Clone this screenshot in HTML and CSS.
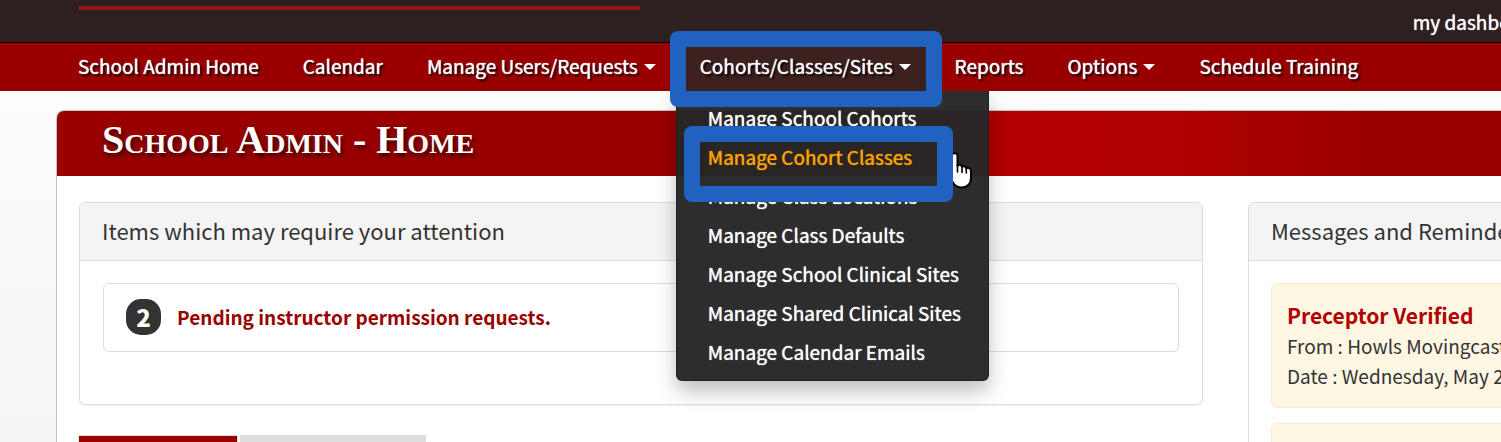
FILE: index.html
```html
<!DOCTYPE html>
<html lang="en">
<head>
<meta charset="utf-8">
<title>School Admin - Home</title>
<link rel="stylesheet" href="styles.css">
</head>
<body>
<header class="topbar">
  <div class="brand-rule"></div>
  <a class="dash-link" href="#">my dashboard</a>
</header>
<nav class="navbar">
  <ul class="nav-list">
    <li class="nav-item"><a class="nav-link" href="#">School Admin Home</a></li>
    <li class="nav-item"><a class="nav-link" href="#">Calendar</a></li>
    <li class="nav-item"><a class="nav-link" href="#">Manage Users/Requests<span class="caret"></span></a></li>
    <li class="nav-item nav-item-open">
      <a class="nav-link" href="#">Cohorts/Classes/Sites<span class="caret"></span></a>
      <ul class="menu">
        <li><a class="menu-link" href="#">Manage School Cohorts</a></li>
        <li class="menu-current">
          <a class="menu-link" href="#">Manage Cohort Classes</a>
          <svg class="pointer" viewBox="0 0 28 38" aria-hidden="true">
            <path d="M7 4.500C7 1.500 12.500 1.500 12.500 4.500V15C13 13 17 13.500 17 16C18 14.500 21 15 21.300 17.300C22.500 16 26 17 26 20V27C26 33 22 36.500 16.500 36.500C11 36.500 9 34 6.500 29L2 22C1 19 4 18 7 21Z" fill="#fff" stroke="#000" stroke-width="2" stroke-linejoin="round"/>
            <path d="M12.500 14V21M17 16V21.500M21.300 17.500V22" fill="none" stroke="#000" stroke-width="1.600" stroke-linecap="round"/>
          </svg>
          <span class="highlight highlight-menu"></span>
        </li>
        <li><a class="menu-link" href="#">Manage Class Locations</a></li>
        <li><a class="menu-link" href="#">Manage Class Defaults</a></li>
        <li><a class="menu-link" href="#">Manage School Clinical Sites</a></li>
        <li><a class="menu-link" href="#">Manage Shared Clinical Sites</a></li>
        <li><a class="menu-link" href="#">Manage Calendar Emails</a></li>
      </ul>
      <span class="highlight highlight-nav"></span>
    </li>
    <li class="nav-item"><a class="nav-link" href="#">Reports</a></li>
    <li class="nav-item"><a class="nav-link" href="#">Options<span class="caret"></span></a></li>
    <li class="nav-item"><a class="nav-link" href="#">Schedule Training</a></li>
  </ul>
</nav>
<main class="page">
  <h1 class="banner">School Admin - Home</h1>
  <div class="columns">
    <div class="primary">
      <section class="card">
        <h2 class="card-title">Items which may require your attention</h2>
        <div class="card-body">
          <a class="pending" href="#"><span class="badge">2</span>Pending instructor permission requests.</a>
        </div>
      </section>
      <div class="tabs">
        <button class="tab tab-active" type="button" aria-label="First tab"></button>
        <button class="tab" type="button" aria-label="Second tab"></button>
      </div>
    </div>
    <section class="card messages">
      <h2 class="card-title">Messages and Reminders</h2>
      <div class="card-body message-list">
        <article class="message">
          <h3 class="message-title">Preceptor Verified</h3>
          <p class="message-line">From : Howls Movingcastle</p>
          <p class="message-line">Date : Wednesday, May 2</p>
        </article>
        <article class="message"></article>
      </div>
    </section>
  </div>
</main>
</body>
</html>
```
FILE: styles.css
```css
* { box-sizing: border-box; }
html { height: 100%; }
body {
  margin: 0;
  height: 100vh;
  overflow: hidden;
  background: linear-gradient(#fdfdfd 90px, #f5f5f5);
  color: #333;
  font-family: "Noto Sans CJK SC", "Open Sans", sans-serif;
  font-size: 19px;
  line-height: 30px;
}
a { color: inherit; text-decoration: none; }
ul { list-style: none; margin: 0; padding: 0; }
h1, h2, h3, p { margin: 0; }

.topbar {
  display: flex;
  justify-content: space-between;
  height: 43px;
  padding: 6px 0 0 79px;
  background: #2e2021;
  border-bottom: 1px solid #000;
}
.brand-rule { width: 561px; height: 4px; background: #911a1c; }
.dash-link { color: #fff; margin-right: -39px; padding-top: 1px; white-space: nowrap; text-shadow: 0 0 1px #fff; }

.navbar { background: #900; padding-left: 56px; }
.nav-list { display: flex; }
.nav-item { position: relative; }
.nav-link {
  display: flex;
  align-items: center;
  gap: 6px;
  height: 48px;
  padding: 0 22px 2px;
  color: #fff;
  white-space: nowrap;
  text-shadow: 0 0 1px #fff, 2px 2px 2px #000;
}
.nav-item-open { background: #3d211f; z-index: 2; }
.caret { border: 6px solid transparent; border-top-color: #fff; border-bottom: 0; margin-top: 2px; }

.menu {
  position: absolute;
  top: 100%;
  left: -2px;
  width: 313px;
  padding: 7px 0 9px;
  background: rgba(38, 38, 38, .97);
  border: 1px solid #222;
  border-top: 0;
  border-radius: 0 0 6px 6px;
  box-shadow: 0 10px 20px rgba(0, 0, 0, .25);
}
.menu-link {
  display: block;
  padding: 0 31px;
  color: #fff;
  line-height: 39px;
  white-space: nowrap;
  text-shadow: 0 0 1px currentColor;
}
.menu-current { position: relative; }
.menu-current .menu-link { color: #ffa500; }
.highlight {
  position: absolute;
  border: 16px solid #2062bf;
  border-radius: 8px;
  pointer-events: none;
}
.highlight-nav { inset: -12px -9px -16px -8px; }
.highlight-menu { top: -11px; left: 7px; width: 269px; height: 76px; }
.pointer { position: absolute; top: 14px; left: 268px; width: 28px; height: 38px; }

.page {
  margin: 19px 0 0 56px;
  height: 100%;
  background: #fff;
  border: 1px solid #c4c4c4;
  border-right: 0;
  border-radius: 8px 0 0 0;
}
.banner {
  height: 65px;
  padding-left: 45px;
  background: linear-gradient(90deg, #900 46%, #b30000 66%, #b00000 78%, #900 92%);
  border-radius: 7px 0 0 0;
  color: #fff;
  font-family: "Liberation Serif", serif;
  font-size: 40px;
  font-variant: small-caps;
  line-height: 58px;
  text-shadow: 2px 3px 4px rgba(0, 0, 0, .7);
}
.columns { display: flex; gap: 45px; padding: 26px 0 0 22px; align-items: flex-start; }
.primary { flex: 1; }
.card { background: #fff; border: 1px solid #ddd; border-radius: 6px; box-shadow: 0 1px 2px rgba(0, 0, 0, .06); }
.card-title {
  padding: 0 22px 3px;
  background: #f4f4f4;
  border-bottom: 1px solid #ddd;
  border-radius: 5px 5px 0 0;
  font-size: 22px;
  font-weight: 400;
  line-height: 54px;
  white-space: nowrap;
}
.card-body { padding: 22px 23px 52px; }
.pending {
  display: flex;
  align-items: center;
  gap: 16px;
  height: 69px;
  padding: 0 22px 2px;
  border: 1px solid #ddd;
  border-radius: 6px;
  color: #900;
  font-weight: 700;
}
.badge {
  width: 35px;
  height: 36px;
  border-radius: 15px;
  background: #333;
  color: #fff;
  font-size: 24px;
  font-weight: 900;
  line-height: 36px;
  text-align: center;
}
.messages { width: 400px; margin-right: -147px; }
.message-list { display: grid; gap: 15px; padding: 22px; }
.message {
  min-height: 125px;
  padding: 15px;
  background: #fdf6e3;
  border: 1px solid #faebcc;
  border-radius: 6px;
  white-space: nowrap;
}
.message-title { color: #b30000; font-size: 21px; line-height: 32px; }
.tabs { display: flex; gap: 2px; padding-top: 30px; }
.tab { width: 186px; height: 45px; padding: 0; border: 1px solid #ddd; background: #ddd; }
.tab-active { width: 160px; margin-left: -1px; background: #900; }
```
